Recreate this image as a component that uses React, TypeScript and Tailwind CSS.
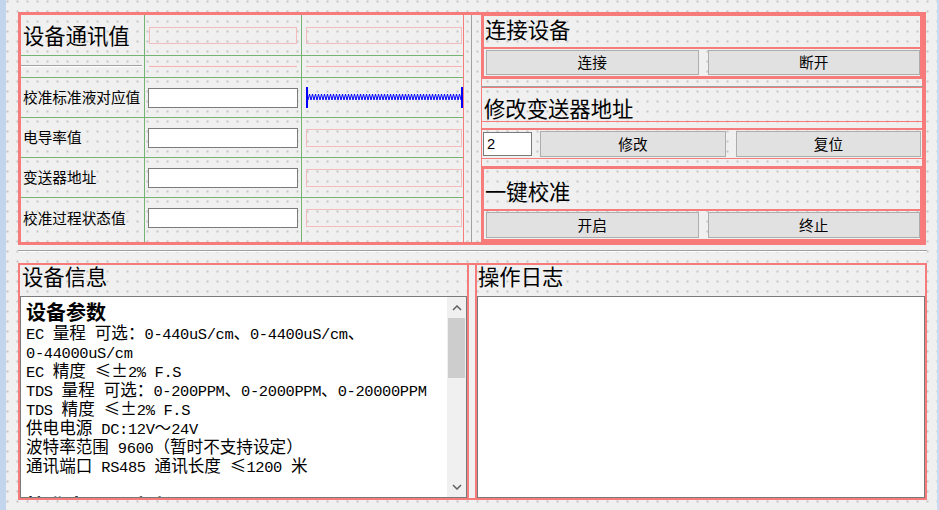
import React from 'react';

const CJK = /([\u00b1\u2000-\u206f\u2190-\u22ff\u3000-\u9fff\uff00-\uffef]+)/;

// SimSun-like look: half-width latin next to full-width CJK
function Mixed({ text }: { text: string }) {
  const parts = text.split(CJK);
  return (
    <>
      {parts.map((p, i) =>
        i % 2 === 1 ? (
          <span key={i} className="font-['Noto_Sans_CJK_SC'] text-[16.6px]">
            {p}
          </span>
        ) : (
          <span key={i} className="font-['Liberation_Mono'] text-[15.4px] tracking-[-0.35px]">
            {p}
          </span>
        )
      )}
    </>
  );
}

function Btn({ label, className = '' }: { label: string; className?: string }) {
  return (
    <div
      className={`flex items-center justify-center border border-[#adadad] bg-[#e1e1e1] text-[14.67px] leading-none text-black ${className}`}
    >
      {label}
    </div>
  );
}

function Spring() {
  let d = 'M2,13';
  for (let x = 2; x < 153; x += 3) d += ` L${x + 1.5},7 L${x + 3},13`;
  return (
    <svg width="157" height="21" viewBox="0 0 157 21" className="block">
      <rect x="0" y="0" width="2" height="21" fill="#0000ff" />
      <rect x="155" y="0" width="2" height="21" fill="#0000ff" />
      <path d={d} fill="none" stroke="#0000ff" strokeWidth="1" />
    </svg>
  );
}

function Chevron({ down = false }: { down?: boolean }) {
  return (
    <svg width="10" height="6" viewBox="0 0 10 6" className="block">
      <path
        d={down ? 'M1,1 L5,5 L9,1' : 'M1,5 L5,1 L9,5'}
        fill="none"
        stroke="#606060"
        strokeWidth="1.5"
      />
    </svg>
  );
}

const rows = ['校准标准液对应值', '电导率值', '变送器地址', '校准过程状态值'];

function cellCls(r: number, c: number) {
  return `flex border-[#74b374] ${r < 5 ? 'border-b' : ''} ${c < 2 ? 'border-r' : ''}`;
}

function ValueGrid() {
  return (
    <div className="grid w-[443px] grid-cols-[124px_157px_161px] grid-rows-[41px_22px_40px_40px_40px_44px] border-r border-[#f77b7b]">
      {/* row 0 */}
      <div className={`${cellCls(0, 0)} items-center pl-[2px] text-[21.33px] leading-none`}>设备通讯值</div>
      <div className={`${cellCls(0, 1)} items-center px-[4px]`}>
        <div className="h-[17px] w-full border border-[#f2bcbc]" />
      </div>
      <div className={`${cellCls(0, 2)} items-center pl-[4px] pr-[1px]`}>
        <div className="h-[17px] w-full border border-[#f2bcbc]" />
      </div>

      {/* row 1 */}
      <div className={`${cellCls(1, 0)} items-start pr-[2px] pt-[9px]`}>
        <div className="h-[2px] w-full border-t border-b border-t-[#a0a0a0] border-b-white" />
      </div>
      <div className={`${cellCls(1, 1)} items-start px-[4px] pt-[10px]`}>
        <div className="h-px w-full bg-[#f6b0b0]" />
      </div>
      <div className={`${cellCls(1, 2)} items-start pl-[4px] pr-[1px] pt-[10px]`}>
        <div className="h-px w-full bg-[#f6b0b0]" />
      </div>

      {/* rows 2-5 */}
      {rows.map((label, i) => {
        const r = i + 2;
        const last = r === 5;
        return (
          <React.Fragment key={label}>
            <div className={`${cellCls(r, 0)} items-center pl-[2px] text-[14.67px] leading-none ${last ? 'pb-[4px]' : ''}`}>
              {label}
            </div>
            <div className={`${cellCls(r, 1)} items-center px-[3px] ${last ? 'pb-[4px]' : ''}`}>
              <div className="h-[20px] w-full border border-[#7a7a7a] bg-white" />
            </div>
            <div className={`${cellCls(r, 2)} items-center ${last ? 'pb-[4px]' : ''} ${r === 2 ? 'pl-[4px]' : 'pl-[4px] pr-[1px]'}`}>
              {r === 2 ? <Spring /> : <div className="h-[18px] w-full border border-[#f2bcbc]" />}
            </div>
          </React.Fragment>
        );
      })}
    </div>
  );
}

function RightPanel() {
  return (
    <div className="flex w-[442px] flex-col">
      {/* 连接设备 */}
      <div className="flex h-[64px] flex-col border-x-2 border-b-2 border-[#f77b7b]">
        <div className="h-[33px] border border-[#f77b7b] pl-[1px] pt-[2px] text-[21.33px] leading-none">连接设备</div>
        <div className="flex flex-1 items-center gap-[9px] border border-[#f77b7b] pl-[2px]">
          <Btn label="连接" className="h-[25px] flex-1" />
          <Btn label="断开" className="h-[25px] flex-1" />
        </div>
      </div>
      <div className="h-[7px] border-x border-[#f77b7b]" />

      {/* 修改变送器地址 */}
      <div className="flex h-[73px] flex-col border-t border-[#a0a0a0]">
        <div className="h-[35px] border border-[#f77b7b] pl-[2px] pt-[9px] text-[21.33px] leading-none">修改变送器地址</div>
        <div className="h-[7px] border border-t-0 border-[#f77b7b]" />
        <div className="flex h-[30px] items-center border border-[#f77b7b] pl-[1px]">
          <div className="flex h-[24px] w-[49px] items-center border border-[#7a7a7a] bg-white pl-[3px] font-['Liberation_Sans'] text-[14.67px] leading-none">
            2
          </div>
          <Btn label="修改" className="ml-[8px] h-[26px] w-[186px]" />
          <Btn label="复位" className="ml-[10px] h-[26px] w-[185px]" />
        </div>
      </div>
      <div className="h-[7px] border-x border-[#f77b7b]" />

      {/* 一键校准 */}
      <div className="flex h-[76px] flex-col border-2 border-[#f77b7b]">
        <div className="h-[42px] border border-[#f77b7b] pl-[1px] pt-[11px] text-[21.33px] leading-none">一键校准</div>
        <div className="flex flex-1 items-center gap-[9px] border border-[#f77b7b] pl-[2px]">
          <Btn label="开启" className="h-[26px] flex-1" />
          <Btn label="终止" className="h-[26px] flex-1" />
        </div>
      </div>
    </div>
  );
}

const infoLines = [
  'EC 量程 可选：0-440uS/cm、0-4400uS/cm、',
  '0-44000uS/cm',
  'EC 精度 ≤±2% F.S',
  'TDS 量程 可选：0-200PPM、0-2000PPM、0-20000PPM',
  'TDS 精度 ≤±2% F.S',
  '供电电源 DC:12V～24V',
  '波特率范围 9600（暂时不支持设定）',
  '通讯端口 RS485 通讯长度 ≤1200 米',
  '',
];

function InfoBox() {
  return (
    <div className="flex h-[202px] border border-[#7a7a7a] bg-white">
      <div className="flex-1 overflow-hidden pl-[5px] pt-[3px] text-black">
        <div className="h-[23px] font-['Noto_Sans_CJK_SC'] text-[20px] font-bold leading-[23px]">设备参数</div>
        {infoLines.map((t, i) => (
          <div key={i} className="h-[19px] whitespace-pre leading-[19px]">
            <Mixed text={t} />
          </div>
        ))}
        <div className="h-[23px] font-['Noto_Sans_CJK_SC'] text-[20px] font-bold leading-[23px]">校准步骤（手动）</div>
      </div>
      <div className="flex w-[19px] flex-col bg-[#f0f0f0]">
        <div className="flex h-[21px] items-center justify-center">
          <Chevron />
        </div>
        <div className="mx-[1px] h-[60px] bg-[#cdcdcd]" />
        <div className="flex-1" />
        <div className="flex h-[21px] items-center justify-center">
          <Chevron down />
        </div>
      </div>
    </div>
  );
}

export default function App() {
  return (
    <div className="flex h-[510px] w-[939px] overflow-hidden bg-[#f0f0f0] bg-[radial-gradient(circle,#949494_0.6px,transparent_0.8px)] bg-[length:10px_10px] bg-[position:2.5px_-3.5px] font-['Noto_Sans_CJK_SC',sans-serif] text-black">
      <div className="w-[6px] bg-[#c2d5ed]" />
      <div className="flex w-[931px] flex-col pl-[12px] pt-[12px]">
        {/* top section */}
        <div className="flex h-[233px] w-[908px] border-[3px] border-[#f77b7b]">
          <ValueGrid />
          <div className="w-[17px] pl-[7px]">
            <div className="h-full w-px bg-[#a0a0a0]" />
          </div>
          <RightPanel />
        </div>

        <div className="mt-[5px] h-[2px] w-[909px] border-t border-b border-t-[#a0a0a0] border-b-white" />

        {/* bottom section */}
        <div className="mt-[11px] flex h-[237px] w-[909px] border-2 border-[#f77b7b]">
          <div className="flex w-[449px] flex-col border-r-2 border-[#f77b7b]">
            <div className="h-[31px] pl-[2px] text-[21.33px] leading-none">设备信息</div>
            <InfoBox />
          </div>
          <div className="w-[6px]" />
          <div className="flex flex-1 flex-col border-l-2 border-[#f77b7b]">
            <div className="h-[31px] pl-[1px] text-[21.33px] leading-none">操作日志</div>
            <div className="h-[202px] border border-[#7a7a7a] bg-white" />
          </div>
        </div>
      </div>
      <div className="w-[2px] bg-[#c9dcf2]" />
    </div>
  );
}
